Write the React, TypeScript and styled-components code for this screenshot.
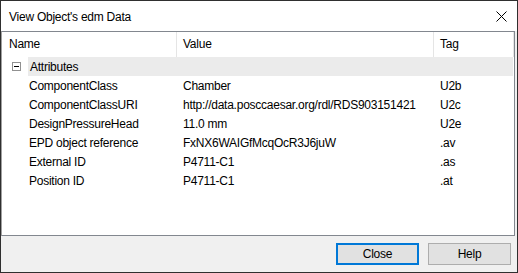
import React from "react";
import styled, { createGlobalStyle } from "styled-components";

const Global = createGlobalStyle`
  html, body { margin: 0; padding: 0; background: #ffffff; }
  * { box-sizing: border-box; }
  body { font-family: "Liberation Sans", Arial, sans-serif; font-size: 12px; letter-spacing: -0.25px; color: #000; }
`;

const Window = styled.div`
  width: 518px;
  height: 273px;
  border: 1px solid #2f2f2f;
  background: #f0f0f0;
  display: flex;
  flex-direction: column;
`;

const TitleBar = styled.div`
  height: 30px;
  background: #ffffff;
  display: flex;
  align-items: center;
  justify-content: space-between;
  padding: 0 10px 0 8px;
  flex-shrink: 0;
`;

const Title = styled.span`
  font-size: 12px;
  color: #000;
  padding-top: 1px;
`;

const CloseX = styled.div`
  width: 11px;
  height: 11px;
  display: flex;
  margin-top: 1px;
`;

const List = styled.div`
  margin: 0 2px 0 0;
  height: 205px;
  border: 1px solid #82878f;
  border-left-color: #a0a0a0;
  background: #ffffff;
  display: flex;
  flex-direction: column;
  flex-shrink: 0;
`;

const Cols = "175px 257px 80px";

const Header = styled.div`
  display: grid;
  grid-template-columns: ${Cols};
  height: 25px;
`;

const HeadCell = styled.div<{ $sep?: boolean }>`
  display: flex;
  align-items: center;
  padding-left: ${(p) => (p.$sep ? 6 : 7)}px;
  border-right: 1px solid #e5e5e5;
  padding-bottom: 1px;
`;

const GroupRow = styled.div`
  display: flex;
  align-items: center;
  height: 19px;
`;

const Expander = styled.div`
  width: 9px;
  height: 9px;
  border: 1px solid #919191;
  margin: 0 7px 0 10px;
  display: flex;
  align-items: center;
  justify-content: center;
  &::after {
    content: "";
    width: 5px;
    height: 1px;
    background: #000;
  }
`;

const GroupLabel = styled.div`
  flex: 1;
  align-self: stretch;
  background: #ebebeb;
  display: flex;
  align-items: center;
  padding-left: 2px;
  margin-right: 1px;
`;

const Row = styled.div`
  display: grid;
  grid-template-columns: ${Cols};
  height: 19px;
  align-items: center;
`;

const Cell = styled.div<{ $indent?: number }>`
  padding-left: ${(p) => p.$indent ?? 6}px;
  white-space: nowrap;
  overflow: hidden;
`;

const Footer = styled.div`
  flex: 1;
  display: flex;
  justify-content: flex-end;
  align-items: flex-end;
  gap: 9px;
  padding: 0 6px 7px 0;
`;

const Button = styled.button<{ $default?: boolean }>`
  width: 83px;
  height: 22px;
  font-family: inherit;
  font-size: 12px;
  letter-spacing: inherit;
  color: #000;
  background: #e1e1e1;
  border: ${(p) => (p.$default ? "2px solid #0078d7" : "1px solid #adadad")};
  padding: 0;
  margin: 0;
`;

const rows: [string, string, string][] = [
  ["ComponentClass", "Chamber", "U2b"],
  ["ComponentClassURI", "http://data.posccaesar.org/rdl/RDS903151421", "U2c"],
  ["DesignPressureHead", "11.0 mm", "U2e"],
  ["EPD object reference", "FxNX6WAIGfMcqOcR3J6juW", ".av"],
  ["External ID", "P4711-C1", ".as"],
  ["Position ID", "P4711-C1", ".at"],
];

export default function App() {
  return (
    <>
      <Global />
      <Window>
        <TitleBar>
          <Title>View Object's edm Data</Title>
          <CloseX>
            <svg width="11" height="11" viewBox="0 0 11 11">
              <path d="M0.5 0.5 L10.5 10.5 M10.5 0.5 L0.5 10.5" stroke="#000" strokeWidth="1" />
            </svg>
          </CloseX>
        </TitleBar>
        <List>
          <Header>
            <HeadCell>Name</HeadCell>
            <HeadCell $sep>Value</HeadCell>
            <HeadCell $sep>Tag</HeadCell>
          </Header>
          <GroupRow>
            <Expander />
            <GroupLabel>Attributes</GroupLabel>
          </GroupRow>
          {rows.map(([n, v, t]) => (
            <Row key={n}>
              <Cell $indent={27}>{n}</Cell>
              <Cell>{v}</Cell>
              <Cell>{t}</Cell>
            </Row>
          ))}
        </List>
        <Footer>
          <Button $default>Close</Button>
          <Button>Help</Button>
        </Footer>
      </Window>
    </>
  );
}
